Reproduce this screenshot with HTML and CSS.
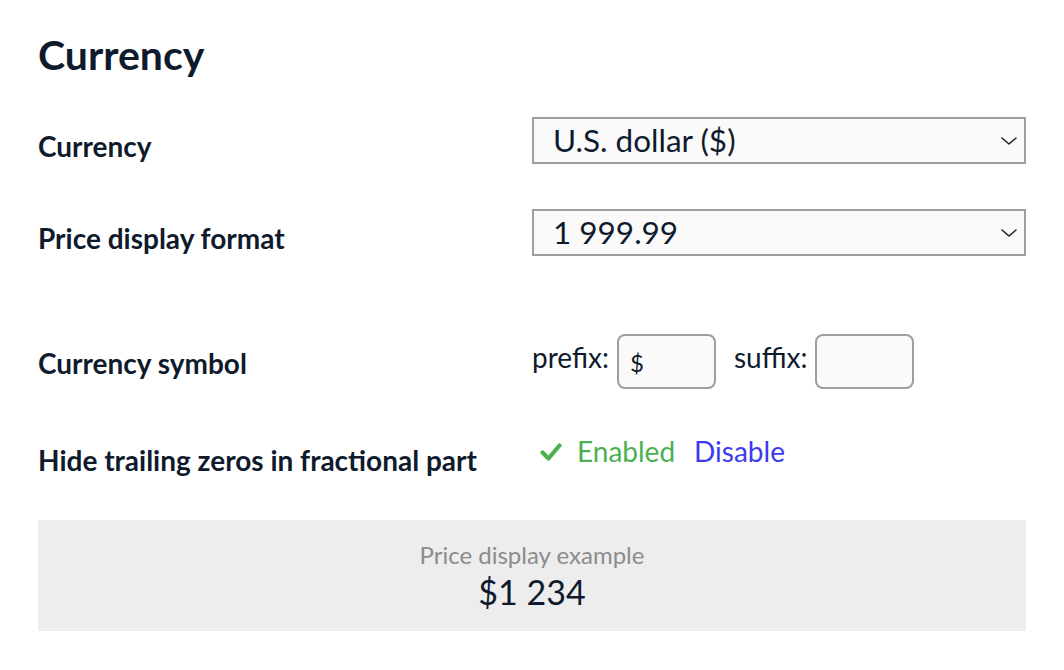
FILE: index.html
```html
<!DOCTYPE html>
<html lang="en">
<head>
<meta charset="utf-8">
<title>Currency</title>
<link rel="stylesheet" href="styles.css">
</head>
<body>
<main class="page">
  <h1 class="title">Currency</h1>

  <div class="row row-currency">
    <div class="label">Currency</div>
    <div class="control">
      <div class="select-wrap">
        <select class="select">
          <option>U.S. dollar ($)</option>
        </select>
        <svg class="chevron" width="16" height="8" viewBox="0 0 16 8"><path d="M1 1 L8 7 L15 1" fill="none" stroke="#1b2535" stroke-width="1.6" stroke-linecap="round" stroke-linejoin="round"/></svg>
      </div>
    </div>
  </div>

  <div class="row row-format">
    <div class="label">Price display format</div>
    <div class="control">
      <div class="select-wrap">
        <select class="select">
          <option>1 999.99</option>
        </select>
        <svg class="chevron" width="16" height="8" viewBox="0 0 16 8"><path d="M1 1 L8 7 L15 1" fill="none" stroke="#1b2535" stroke-width="1.6" stroke-linecap="round" stroke-linejoin="round"/></svg>
      </div>
    </div>
  </div>

  <div class="row row-symbol">
    <div class="label">Currency symbol</div>
    <div class="control symbol">
      <span class="affix">prefix:</span>
      <input class="text-input" type="text" value="$">
      <span class="affix affix-suffix">suffix:</span>
      <input class="text-input" type="text" value="">
    </div>
  </div>

  <div class="row row-zeros">
    <div class="label">Hide trailing zeros in fractional part</div>
    <div class="control toggle">
      <svg class="check" width="22" height="20" viewBox="0 0 22 20"><path d="M2.5 10.5 L8.5 16.5 L19.5 3.5" fill="none" stroke="#4caf50" stroke-width="4.2" stroke-linecap="round" stroke-linejoin="round"/></svg>
      <span class="enabled">Enabled</span>
      <a class="disable" href="#">Disable</a>
    </div>
  </div>

  <section class="example">
    <div class="example-caption">Price display example</div>
    <div class="example-value">$1 234</div>
  </section>
</main>
</body>
</html>
```

FILE: styles.css
```css
* { box-sizing: border-box; }

html, body {
  margin: 0;
  padding: 0;
  background: #ffffff;
}

body {
  font-family: Lato, "Noto Sans", "Liberation Sans", sans-serif;
  color: #0f1b2d;
}

.page {
  width: 988px;
  margin-left: 38px;
  padding-top: 30px;
}

.title {
  margin: 0;
  font-size: 41px;
  font-weight: 700;
  line-height: 50px;
}

.row {
  display: grid;
  grid-template-columns: 494px 494px;
  align-items: start;
}

.row-currency { margin-top: 37px; }
.row-format { margin-top: 45px; }
.row-symbol { margin-top: 78px; }
.row-zeros { margin-top: 43px; }

.label {
  font-size: 28px;
  font-weight: 700;
  line-height: 34px;
  padding-top: 12px;
}

.select-wrap {
  position: relative;
  width: 494px;
}

.select {
  appearance: none;
  -webkit-appearance: none;
  display: block;
  width: 100%;
  height: 47px;
  margin: 0;
  padding: 0 40px 0 19px;
  border: 2px solid #9e9e9e;
  border-radius: 0;
  background: #fafafa;
  color: #0f1b2d;
  font-family: Lato, "Noto Sans", sans-serif;
  font-size: 31.5px;
  line-height: 43px;
}

.chevron {
  position: absolute;
  right: 9px;
  top: 20px;
  pointer-events: none;
}

.symbol {
  display: flex;
  align-items: center;
  height: 54px;
}

.affix {
  font-size: 28px;
  line-height: 34px;
  margin-top: -8px;
}

.affix-suffix {
  margin-left: 18px;
}

.text-input {
  width: 99px;
  height: 55px;
  margin-left: 8px;
  padding: 3px 11px 0;
  border: 2px solid #9e9e9e;
  border-radius: 8px;
  background: #fafafa;
  color: #0f1b2d;
  font-family: Lato, "Noto Sans", sans-serif;
  font-size: 24px;
  outline: none;
}

.toggle {
  display: flex;
  align-items: center;
  padding-top: 3px;
  font-size: 28px;
  line-height: 34px;
}

.check {
  margin-left: 8px;
  margin-right: 15px;
  margin-top: 2px;
}

.enabled {
  color: #4caf50;
}

.disable {
  margin-left: 19px;
  color: #3b3bef;
  text-decoration: none;
}

.example {
  margin-top: 43px;
  height: 111px;
  background: #ededed;
  display: flex;
  flex-direction: column;
  align-items: center;
  padding-top: 20px;
}

.example-caption {
  font-size: 24px;
  line-height: 29px;
  color: #8c8c8c;
}

.example-value {
  font-size: 34px;
  line-height: 42px;
  margin-top: 2px;
  color: #0f1b2d;
}
```
